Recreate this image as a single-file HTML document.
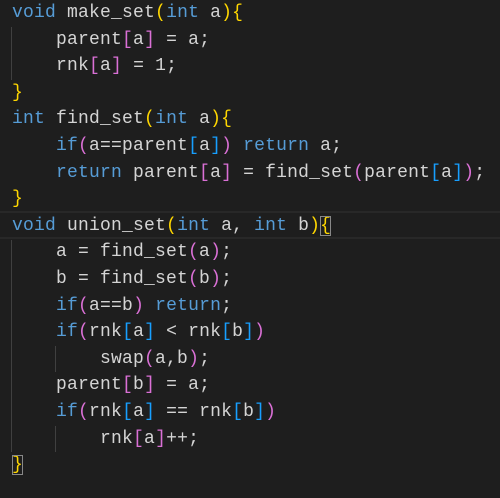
<!DOCTYPE html>
<html><head><meta charset="utf-8"><style>
html,body{margin:0;padding:0;background:#1e1e1e;width:500px;height:498px;overflow:hidden}
.c{position:absolute;left:12px;top:0;font-family:"Liberation Mono",monospace;font-size:18px;letter-spacing:0.2px;color:#d4d4d4}
.l{height:26.6px;line-height:26.6px;white-space:pre}
.k{color:#569cd6}.y{color:#ffd700}.p{color:#da70d6}.b{color:#179fff}
.g{position:absolute;width:1px;background:#404040}
.cur{position:absolute;left:0;width:500px;top:211px;height:24px;border-top:2px solid #282828;border-bottom:2px solid #282828}
.m{outline:1px solid #888;outline-offset:-1px}
</style></head><body>
<div class="cur"></div>
<div class="g" style="left:11px;top:27px;height:53px"></div>
<div class="g" style="left:11px;top:240px;height:212px"></div>
<div class="g" style="left:55px;top:346px;height:26px"></div>
<div class="g" style="left:55px;top:426px;height:26px"></div>
<div class="c"><div class="l"><span class="k">void</span> make_set<span class="y">(</span><span class="k">int</span> a<span class="y">){</span></div><div class="l">    parent<span class="p">[</span>a<span class="p">]</span> = a;</div><div class="l">    rnk<span class="p">[</span>a<span class="p">]</span> = 1;</div><div class="l"><span class="y">}</span></div><div class="l"><span class="k">int</span> find_set<span class="y">(</span><span class="k">int</span> a<span class="y">){</span></div><div class="l">    <span class="k">if</span><span class="p">(</span>a==parent<span class="b">[</span>a<span class="b">]</span><span class="p">)</span> <span class="k">return</span> a;</div><div class="l">    <span class="k">return</span> parent<span class="p">[</span>a<span class="p">]</span> = find_set<span class="p">(</span>parent<span class="b">[</span>a<span class="b">]</span><span class="p">)</span>;</div><div class="l"><span class="y">}</span></div><div class="l"><span class="k">void</span> union_set<span class="y">(</span><span class="k">int</span> a, <span class="k">int</span> b<span class="y">)</span><span class="y m">{</span></div><div class="l">    a = find_set<span class="p">(</span>a<span class="p">)</span>;</div><div class="l">    b = find_set<span class="p">(</span>b<span class="p">)</span>;</div><div class="l">    <span class="k">if</span><span class="p">(</span>a==b<span class="p">)</span> <span class="k">return</span>;</div><div class="l">    <span class="k">if</span><span class="p">(</span>rnk<span class="b">[</span>a<span class="b">]</span> &lt; rnk<span class="b">[</span>b<span class="b">]</span><span class="p">)</span></div><div class="l">        swap<span class="p">(</span>a,b<span class="p">)</span>;</div><div class="l">    parent<span class="p">[</span>b<span class="p">]</span> = a;</div><div class="l">    <span class="k">if</span><span class="p">(</span>rnk<span class="b">[</span>a<span class="b">]</span> == rnk<span class="b">[</span>b<span class="b">]</span><span class="p">)</span></div><div class="l">        rnk<span class="p">[</span>a<span class="p">]</span>++;</div><div class="l"><span class="y m">}</span></div></div>
</body></html>
